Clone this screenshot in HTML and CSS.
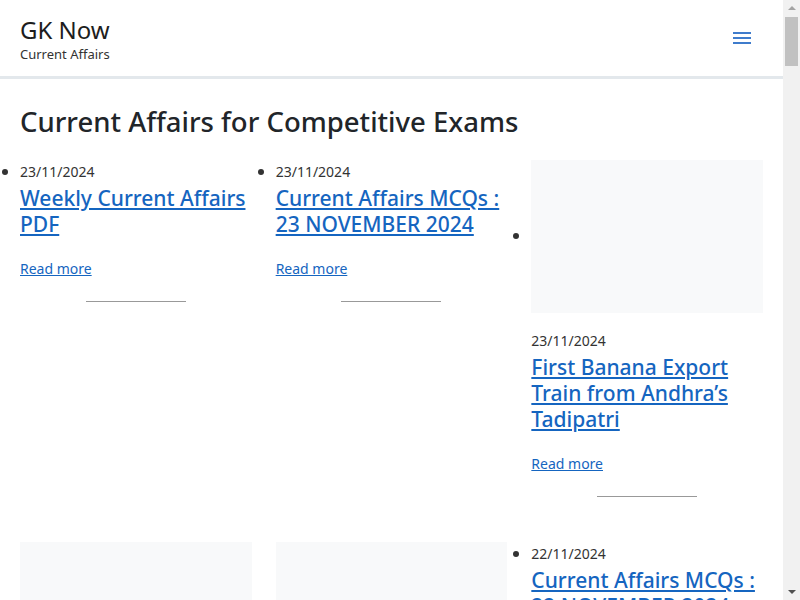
FILE: index.html
```html
<!DOCTYPE html>
<html lang="en">
  <head>
    <meta charset="UTF-8" />
    <meta name="viewport" content="width=device-width, initial-scale=1.0" />
    <title>GK Now - Current Affairs</title>
    <link rel="stylesheet" href="styles.css">
  </head>
  <body>
    <header class="site-header">
      <div class="brand">
        <p class="site-name">GK Now</p>
        <p class="tagline">Current Affairs</p>
      </div>
      <button class="menu-toggle" aria-label="Menu">
        <svg width="18" height="14" viewBox="0 0 18 14">
          <rect x="0" y="1" width="18" height="2" fill="#3f7ccc" />
          <rect x="0" y="6" width="18" height="2" fill="#3f7ccc" />
          <rect x="0" y="11" width="18" height="2" fill="#3f7ccc" />
        </svg>
      </button>
    </header>

    <main class="content">
      <h1 class="page-title">Current Affairs for Competitive Exams</h1>
      <ul class="posts">
        <li class="post">
          <p class="date">23/11/2024</p>
          <h2 class="post-title"><a href="#">Weekly Current Affairs PDF</a></h2>
          <p class="more"><a href="#">Read more</a></p>
          <hr />
        </li>
        <li class="post">
          <p class="date">23/11/2024</p>
          <h2 class="post-title"><a href="#">Current Affairs MCQs : 23 NOVEMBER 2024</a></h2>
          <p class="more"><a href="#">Read more</a></p>
          <hr />
        </li>
        <li class="post">
          <div class="thumb-wrap"><span class="thumb"></span></div>
          <p class="date">23/11/2024</p>
          <h2 class="post-title"><a href="#">First Banana Export Train from Andhra’s Tadipatri</a></h2>
          <p class="more"><a href="#">Read more</a></p>
          <hr />
        </li>
        <li class="post">
          <div class="thumb-wrap"><span class="thumb"></span></div>
          <p class="date">22/11/2024</p>
          <h2 class="post-title"><a href="#">India’s First Indigenous Antibiotic Nafithromycin</a></h2>
          <p class="more"><a href="#">Read more</a></p>
          <hr />
        </li>
        <li class="post">
          <div class="thumb-wrap"><span class="thumb"></span></div>
          <p class="date">22/11/2024</p>
          <h2 class="post-title"><a href="#">Global Energy Efficiency Alliance Launched</a></h2>
          <p class="more"><a href="#">Read more</a></p>
          <hr />
        </li>
        <li class="post">
          <p class="date">22/11/2024</p>
          <h2 class="post-title"><a href="#">Current Affairs MCQs : 22 NOVEMBER 2024</a></h2>
          <p class="more"><a href="#">Read more</a></p>
          <hr />
        </li>
      </ul>
    </main>

    <!-- page scrollbar, drawn over the right edge -->
    <div class="scrollbar">
      <span class="arrow up"></span>
      <span class="scroll-thumb"></span>
      <span class="arrow down"></span>
    </div>
  </body>
</html>
```

FILE: styles.css
```css
body {
  margin: 0 17px 0 0;
  font-family: "Noto Sans", "Open Sans", sans-serif;
  color: #212529;
  background-color: #fff;
}

p {
  margin: 0;
}

.site-header {
  display: flex;
  justify-content: space-between;
  align-items: center;
  height: 76px;
  padding: 0 20px;
  background-color: #fff;
  border-bottom: 3px solid #e3e8ec;
}

.site-name {
  font-size: 24px;
  line-height: 30px;
  margin-top: 1px;
  color: #1d1d1d;
}

.tagline {
  font-size: 13px;
  line-height: 18px;
  color: #333;
}

.menu-toggle {
  background: none;
  border: none;
  padding: 0;
  margin-right: 12px;
  cursor: pointer;
}

.menu-toggle svg {
  display: block;
}

.content {
  padding: 0 20px 40px;
}

.page-title {
  font-size: 27.5px;
  font-weight: 500;
  line-height: 34px;
  margin: 26px 0 21px;
}

.posts {
  display: grid;
  grid-template-columns: repeat(3, 1fr);
  column-gap: 24px;
  row-gap: 45px;
  margin: 0;
  padding: 0;
}

.post {
  list-style: disc outside;
  color: #333;
}

.thumb-wrap {
  margin-bottom: 17px;
}

.thumb {
  display: inline-block;
  vertical-align: middle;
  width: 100%;
  height: 153px;
  background-color: #f8f9fa;
}

.date {
  font-size: 14px;
  line-height: 22px;
  color: #333;
}

.post-title {
  font-size: 21px;
  font-weight: 500;
  line-height: 26px;
  margin: 2px 0 21px;
}

.post a {
  color: #1565c0;
}

.more {
  font-size: 14px;
  line-height: 22px;
}

.post hr {
  width: 100px;
  margin: 21px auto 0;
  border: none;
  border-top: 1px solid #999;
}

.scrollbar {
  position: fixed;
  top: 0;
  right: 0;
  width: 17px;
  height: 100vh;
  background-color: #f1f1f1;
  display: flex;
  flex-direction: column;
  align-items: center;
}

.arrow {
  width: 0;
  height: 0;
  border-left: 4px solid transparent;
  border-right: 4px solid transparent;
}

.arrow.up {
  margin-top: 6px;
  border-bottom: 4px solid #a3a3a3;
}

.arrow.down {
  margin-top: auto;
  margin-bottom: 6px;
  border-top: 4px solid #505050;
}

.scroll-thumb {
  width: 13px;
  height: 49px;
  margin-top: 7px;
  background-color: #c1c1c1;
}
```
